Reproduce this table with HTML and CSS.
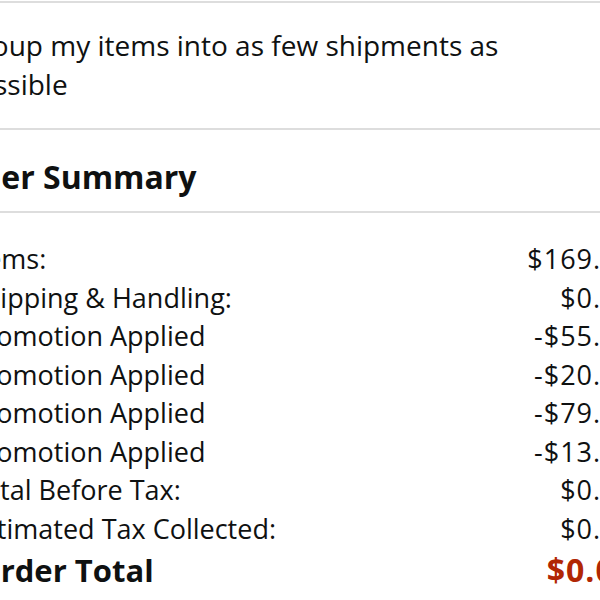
FILE: index.html
```html
<!DOCTYPE html>
<html lang="en">

<head>
    <meta charset="UTF-8">
    <meta name="viewport" content="width=device-width, initial-scale=1.0">
    <title>Order Summary</title>
    <link rel="stylesheet" href="styles.css">
</head>

<body>
    <div class="page">
        <div class="ship-option">
            <p class="ship-text">Group my items into as few shipments as possible</p>
        </div>

        <div class="summary-head">
            <h2 class="summary-title">Order Summary</h2>
        </div>

        <div class="summary-rows">
            <div class="row">
                <span class="label">Items:</span>
                <span class="value">$169.96</span>
            </div>
            <div class="row">
                <span class="label">Shipping &amp; Handling:</span>
                <span class="value">$0.00</span>
            </div>
            <div class="row">
                <span class="label">Promotion Applied</span>
                <span class="value">-$55.99</span>
            </div>
            <div class="row">
                <span class="label">Promotion Applied</span>
                <span class="value">-$20.99</span>
            </div>
            <div class="row">
                <span class="label">Promotion Applied</span>
                <span class="value">-$79.99</span>
            </div>
            <div class="row">
                <span class="label">Promotion Applied</span>
                <span class="value">-$13.99</span>
            </div>
            <div class="row">
                <span class="label">Total Before Tax:</span>
                <span class="value">$0.00</span>
            </div>
            <div class="row">
                <span class="label">Estimated Tax Collected:</span>
                <span class="value">$0.00</span>
            </div>
            <div class="row total">
                <span class="label">Order Total</span>
                <span class="value">$0.00</span>
            </div>
        </div>
    </div>
</body>

</html>
```

FILE: styles.css
```css
* {
    box-sizing: border-box;
    margin: 0;
    padding: 0;
    color: #0f1111;
    font-family: 'Open Sans', 'Noto Sans', sans-serif;
}

body {
    background: #ffffff;
    overflow: hidden;
}

.page {
    width: 662px;
    margin-left: -28px;
    padding-top: 1px;
}

.ship-option {
    border-top: 2px solid #dddddd;
    border-bottom: 2px solid #dddddd;
    padding: 23px 0 24px 0;
}

.ship-text {
    width: 570px;
    margin-left: -12px;
    font-size: 28px;
    line-height: 39px;
}

.summary-head {
    border-bottom: 2px solid #dddddd;
    padding: 28px 0 16px 0;
}

.summary-title {
    margin-left: -31px;
    font-size: 32px;
    font-weight: 700;
    line-height: 37px;
}

.summary-rows {
    padding-top: 27px;
}

.row {
    display: flex;
    justify-content: space-between;
    font-size: 27px;
    line-height: 38.5px;
}

.row span {
    font-size: inherit;
}

.label {
    margin-left: -3px;
}

.value {
    letter-spacing: 1px;
}

.total {
    line-height: 42px;
    padding-top: 1px;
}

.total .label {
    margin-left: 4px;
    font-size: 31px;
    font-weight: 700;
}

.total .value {
    font-size: 32px;
    font-weight: 700;
    color: #b12704;
}
```
